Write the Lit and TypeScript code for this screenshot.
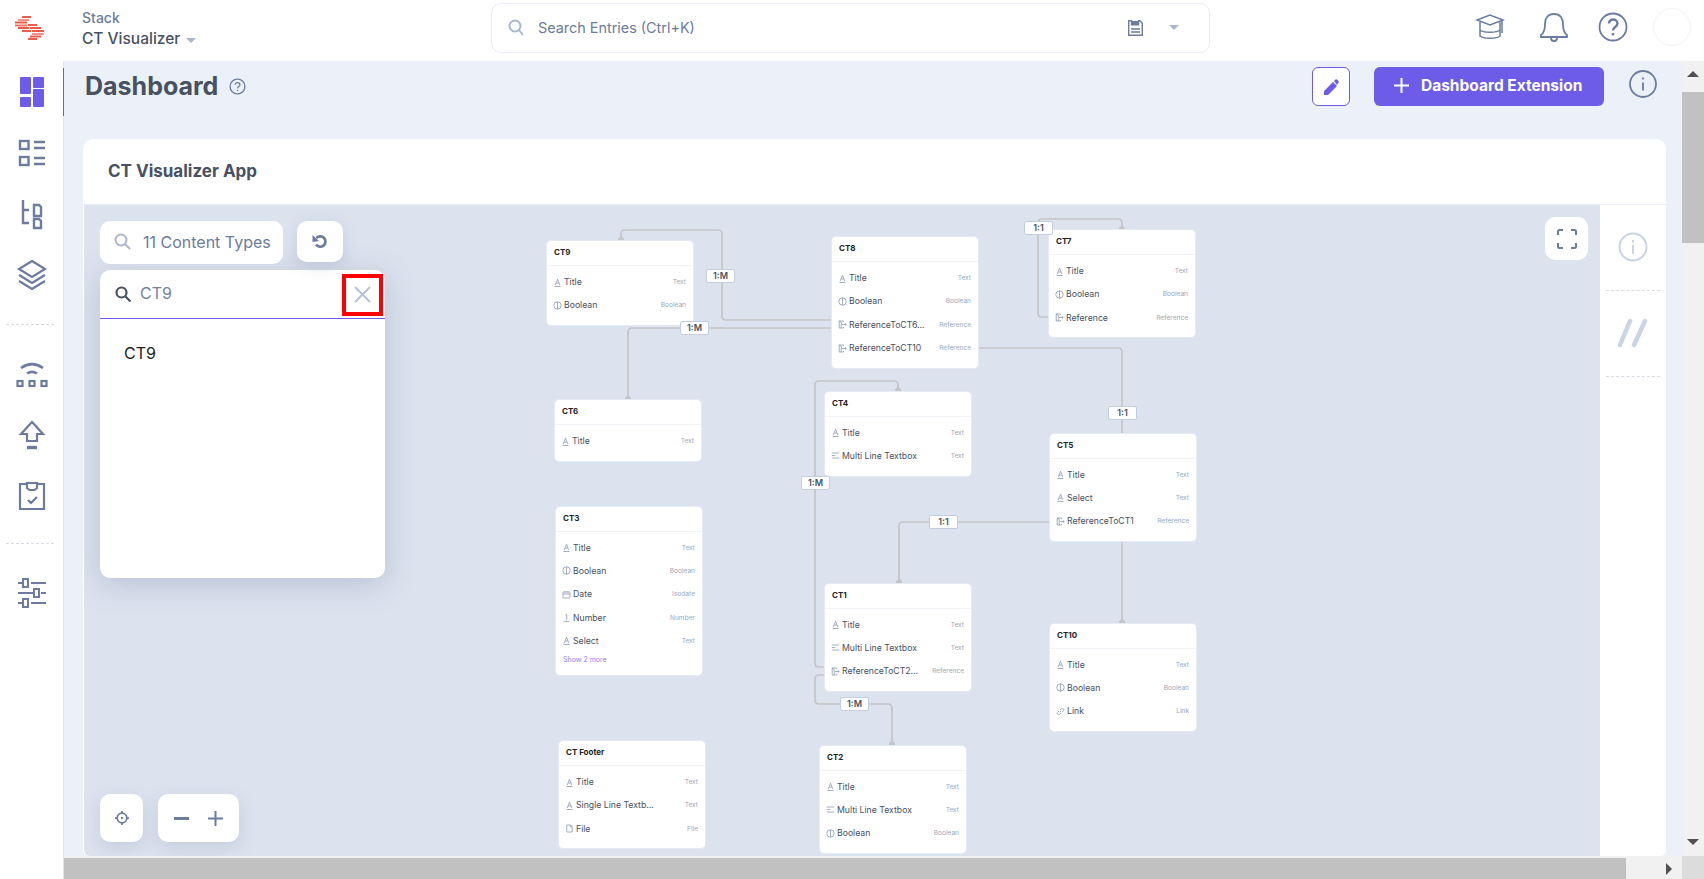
import { LitElement, html, css, svg } from "lit";
import { customElement } from "lit/decorators.js";

const ICONS: Record<string, any> = {
  text: svg`<path d="M2.2 7 4.5 1.2 6.8 7M3.1 5h2.8M1.5 8.5h6"/>`,
  bool: svg`<circle cx="4.5" cy="4.5" r="3.7"/><path d="M4.5.8v7.4"/>`,
  ref: svg`<path d="M5.5 2V1H1.2v7h4.3V7M1.2 1l2 1.2v6M4 4.5h4.2M6.8 3.3l1.4 1.2-1.4 1.2"/>`,
  multi: svg`<path d="M.8 2h7.4M.8 4.5h3.6M.8 7h7.4"/>`,
  date: svg`<rect x="1" y="2" width="7" height="6" rx=".7"/><path d="M1 4h7M3 1v1.5M6 1v1.5"/>`,
  num: svg`<path d="M3.4 2.2 4.7 1.2v5.6M1.5 8.4h6"/>`,
  link: svg`<path d="M3.7 5.3 5.3 3.7M3 4 1.7 5.3a1.4 1.4 0 0 0 2 2L5 6M4 3l1.3-1.3a1.4 1.4 0 0 1 2 2L6 5"/>`,
  file: svg`<path d="M1.8 1h3.6l1.8 1.8V8H1.8zM5.4 1v1.8h1.8"/>`,
};

type Row = [string, string, string];
interface CtNode { name: string; x: number; y: number; rows: Row[]; more?: string; }

const T: Row = ["text", "Title", "Text"];
const B: Row = ["bool", "Boolean", "Boolean"];
const M: Row = ["multi", "Multi Line Textbox", "Text"];

const NODES: CtNode[] = [
  { name: "CT9", x: 546, y: 240, rows: [T, B] },
  { name: "CT8", x: 831, y: 236, rows: [T, B, ["ref", "ReferenceToCT6...", "Reference"], ["ref", "ReferenceToCT10", "Reference"]] },
  { name: "CT7", x: 1048, y: 229, rows: [T, B, ["ref", "Reference", "Reference"]] },
  { name: "CT6", x: 554, y: 399, rows: [T] },
  { name: "CT4", x: 824, y: 390.5, rows: [T, M] },
  { name: "CT5", x: 1049, y: 432.5, rows: [T, ["text", "Select", "Text"], ["ref", "ReferenceToCT1", "Reference"]] },
  { name: "CT3", x: 555, y: 505.5, rows: [T, B, ["date", "Date", "Isodate"], ["num", "Number", "Number"], ["text", "Select", "Text"]], more: "Show 2 more" },
  { name: "CT1", x: 824, y: 582.5, rows: [T, M, ["ref", "ReferenceToCT2...", "Reference"]] },
  { name: "CT10", x: 1049, y: 622.5, rows: [T, B, ["link", "Link", "Link"]] },
  { name: "CT Footer", x: 558, y: 740, rows: [T, ["text", "Single Line Textb...", "Text"], ["file", "File", "File"]] },
  { name: "CT2", x: 819, y: 744.5, rows: [T, M, B] },
];

const EDGES = [
  "M832 320H726Q722 320 722 316V234Q722 230 718 230H625Q621 230 621 234V240",
  "M832 328H632Q628 328 628 332V399",
  "M978 348H1118Q1122 348 1122 352V433",
  "M1049 317H1042Q1038 317 1038 313V223Q1038 219 1042 219H1118Q1122 219 1122 223V229",
  "M825 667H819Q815 667 815 663V385Q815 381 819 381H894Q898 381 898 385V391",
  "M1049 522H903Q899 522 899 526V583",
  "M825 675H819Q815 675 815 679V700Q815 704 819 704H888Q892 704 892 708V745",
  "M1122 542V623",
];
const DOTS = [[621, 240], [628, 399], [1122, 229], [898, 390.5], [899, 582.5], [892, 744.5], [1122, 622.5]];
const LABELS: [string, number, number][] = [
  ["1:M", 706, 269], ["1:M", 680, 321], ["1:1", 1024, 221], ["1:1", 1108, 406],
  ["1:M", 801, 476], ["1:1", 929, 515], ["1:M", 840, 697],
];
const OX = 84, OY = 205;

@customElement("app-root")
export class AppRoot extends LitElement {
  static styles = css`
    :host { display: block; width: 1704px; height: 879px; overflow: hidden; font-family: Inter, "Noto Sans", sans-serif; background: #fff; color: #475161; }
    * { box-sizing: border-box; }
    svg { display: block; flex: none; }
    .ic { fill: none; stroke: #6b7c9f; stroke-width: 2; }
    .top { height: 61px; display: flex; align-items: center; background: #fff; }
    .logo { width: 82px; height: 61px; flex: none; }
    .stack { width: 409px; margin-top: -2px; }
    .stack small { display: block; font-size: 14px; line-height: 18px; color: #6c7c9b; font-weight: 500; }
    .stack b { display: flex; align-items: center; gap: 6px; font-size: 15.5px; line-height: 22px; font-weight: 500; color: #475161; margin-top: 1px; }
    .caret { width: 0; height: 0; border-left: 5px solid transparent; border-right: 5px solid transparent; border-top: 5px solid #a9b6cb; margin-top: 3px; }
    .global { width: 719px; height: 50px; border: 1px solid #e8edf5; border-radius: 10px; display: flex; align-items: center; padding-left: 16px; margin-top: -6px; }
    .global span { margin-left: 14px; font-size: 14.4px; color: #6c7c9b; flex: 1; }
    .global .caret { margin: 0 30px 0 26px; }
    .tools { display: flex; align-items: center; margin-left: 265px; margin-top: -8px; }
    .avatar { width: 38px; height: 38px; border-radius: 50%; border: 1px solid #f2f4f9; margin-left: 25px; }

    .body { display: grid; grid-template-columns: 64px 1618px 22px; grid-template-rows: 795px 23px; height: 818px; }
    .side { grid-row: 1 / 3; border-right: 1px solid #dde3ee; background: #fff; display: flex; flex-direction: column; }
    .nav { height: 61px; display: flex; align-items: center; justify-content: center; position: relative; }
    .nav.on::after { content: ""; position: absolute; right: -1px; top: 7px; width: 1px; height: 48px; background: #6c5ce7; }
    .dash { margin: 19px 6px 18px; border-top: 1px dashed #d6dbe4; height: 1px; width: 48px; }
    .dash.b { margin-top: 17px; }

    .main { background: #ecf0f8; padding: 0 16px 0 19px; display: flex; flex-direction: column; min-width: 0; }
    .head { height: 78px; flex: none; display: flex; align-items: flex-start; padding: 6px 10px 0 2px; }
    .head h1 { margin: 0; font-size: 25px; line-height: 38px; font-weight: 700; color: #475161; }
    .head .q { margin: 11px 0 0 11px; }
    .edit { margin-left: auto; width: 38px; height: 39px; border: 1px solid #6c5ce7; border-radius: 6px; background: #fff; display: flex; align-items: center; justify-content: center; }
    .cta { margin-left: 24px; width: 230px; height: 39px; border-radius: 6px; background: #6c5ce7; color: #fff; font-size: 15.5px; font-weight: 700; display: flex; align-items: center; padding: 0 0 3px 20px; gap: 12px; }
    .inf { margin: 3px -1px 0 25px; }

    .card { flex: 1; min-height: 0; background: #fff; border-radius: 10px 10px 6px 6px; display: flex; flex-direction: column; overflow: hidden; }
    .card h2 { margin: 0; height: 66px; flex: none; padding-left: 25px; font-size: 17px; line-height: 64px; font-weight: 700; color: #475161; border-bottom: 1px solid #e8edf5; }
    .work { flex: 1; min-height: 0; display: flex; padding-left: 1px; }
    .canvas { position: relative; flex: 1; background: #dce2ee; overflow: hidden; border-bottom-left-radius: 6px; }
    .rail { width: 66px; flex: none; display: flex; flex-direction: column; align-items: center; padding-top: 27px; }
    .rail hr { width: 54px; border: 0; border-top: 1px dashed #d6dbe4; margin: 0; }

    .edges { position: absolute; inset: 0; }
    .edges path { fill: none; stroke: #c4c5c7; stroke-width: 1.7; }
    .edges circle { fill: #c4c5c7; }
    .tag { position: absolute; width: 29px; height: 14px; background: #fff; border: 1px solid #c3cde0; border-radius: 2px; font-size: 9px; font-weight: 600; line-height: 12px; text-align: center; color: #475161; }

    .node { position: absolute; width: 148px; background: #fff; border: 1px solid #e6eaf3; border-radius: 5px; padding-bottom: 8px; }
    .node h3 { margin: 0; height: 25px; padding-left: 7px; font-size: 8px; line-height: 22px; font-weight: 700; color: #222; border-bottom: 1px solid #f1f3f8; margin-bottom: 4.5px; }
    .row { height: 23.3px; display: flex; align-items: center; padding: 0 7px 0 6px; }
    .row svg { width: 9px; height: 9px; fill: none; stroke: #8c99b3; stroke-width: .8; margin-right: 2px; }
    .row span { flex: 1; font-size: 8.7px; color: #475161; white-space: nowrap; }
    .row em { font-style: normal; font-size: 6.6px; color: #9aa7bd; }
    .more { height: 15px; line-height: 15px; padding-left: 7px; font-size: 7px; color: #8d7ff0; }

    .float { position: absolute; left: 16px; top: 16px; width: 285px; }
    .bar { display: flex; align-items: flex-start; gap: 14px; }
    .pill { width: 183px; height: 43px; background: #fff; border-radius: 10px; display: flex; align-items: center; padding: 0 0 2px 14px; gap: 12px; font-size: 16px; color: #6c7c9b; white-space: nowrap; }
    .reset { width: 46px; height: 41px; background: #fff; border-radius: 10px; display: flex; align-items: center; justify-content: center; box-shadow: 0 4px 16px rgba(108,124,155,.2); }
    .pop { margin-top: 6px; height: 308px; background: #fff; border-radius: 10px; box-shadow: 0 6px 30px rgba(108,124,155,.32); }
    .pophead { height: 49px; border-bottom: 1px solid #6c5ce7; display: flex; align-items: center; padding-left: 15px; gap: 9px; font-size: 16px; color: #748299; }
    .pophead span { flex: 1; padding-bottom: 2px; }
    .close { width: 41px; height: 42px; border: 4px solid #f00; margin-right: 2px; margin-top: 1px; display: flex; align-items: center; justify-content: center; }
    .pop p { margin: 0; padding: 22px 24px; font-size: 16px; line-height: 24px; color: #222; }

    .fs { position: absolute; right: 12px; top: 12px; width: 43px; height: 43px; background: #fff; border-radius: 10px; display: flex; align-items: center; justify-content: center; }
    .ctl { position: absolute; left: 16px; bottom: 14px; display: flex; gap: 15px; }
    .ctl div { height: 48px; background: #fff; border-radius: 10px; display: flex; align-items: center; justify-content: center; box-shadow: 0 6px 18px rgba(108,124,155,.2); }
    .loc { width: 43px; }
    .zoom { width: 81px; gap: 19px; }

    .vbar { background: #f1f1f1; display: flex; flex-direction: column; align-items: center; padding-top: 31px; position: relative; }
    .vthumb { width: 100%; height: 151px; background: #c1c1c1; }
    .up { position: absolute; top: 10px; left: 5px; border: solid transparent; border-width: 0 6px 6px; border-bottom-color: #505050; }
    .dn { position: absolute; bottom: 11px; left: 5px; border: solid transparent; border-width: 6px 6px 0; border-top-color: #505050; }
    .hbar { background: #f1f1f1; padding-top: 2px; display: flex; }
    .hthumb { width: 1562px; background: #c1c1c1; }
    .rt { align-self: center; margin-left: 40px; border: solid transparent; border-width: 6px 0 6px 6px; border-left-color: #505050; }
    .corner { background: #dcdcdc; }
  `;

  private node(n: CtNode) {
    return html`<div class="node" style="left:${n.x - OX}px;top:${n.y - OY}px">
      <h3>${n.name}</h3>
      ${n.rows.map(r => html`<div class="row"><svg viewBox="0 0 9 9">${ICONS[r[0]]}</svg><span>${r[1]}</span><em>${r[2]}</em></div>`)}
      ${n.more ? html`<div class="more">${n.more}</div>` : ""}
    </div>`;
  }

  render() {
    return html`
      <div class="top">
        <svg class="logo" viewBox="0 0 82 61" fill="#ef5b4b">
          <rect x="22" y="16" width="9" height="2"/><rect x="18" y="19" width="11" height="2" opacity=".65"/><rect x="15" y="21.500" width="12" height="2"/>
          <rect x="15" y="24.500" width="12" height="2" opacity=".85"/><rect x="18" y="27" width="11" height="2"/><rect x="22" y="30" width="9" height="2"/>
          <rect x="28" y="24" width="9" height="2"/><rect x="30" y="27" width="11" height="2"/><rect x="32" y="30" width="12" height="2"/>
          <rect x="32" y="33" width="12" height="2" opacity=".65"/><rect x="30" y="35.500" width="11" height="2"/><rect x="28" y="38" width="9" height="2"/>
        </svg>
        <div class="stack"><small>Stack</small><b>CT Visualizer <i class="caret"></i></b></div>
        <div class="global">
          <svg width="16" height="17" viewBox="0 0 16 17" fill="none" stroke="#a9b6cb" stroke-width="2"><circle cx="7" cy="7" r="5.500"/><path d="m11 11 4 5"/></svg>
          <span>Search Entries (Ctrl+K)</span>
          <svg width="15" height="16" viewBox="0 0 15 16"><path d="M.7.7h2.800v4h7v-4h1.300l2.500 2.500v12.100H.7z" fill="#fff" stroke="#6b7c9f" stroke-width="1.400"/><path d="M3.500 1h7v4h-7z" fill="#6b7c9f"/><path d="M3 9h9M3 12h9" stroke="#6b7c9f" stroke-width="1.400"/></svg>
          <i class="caret"></i>
        </div>
        <div class="tools">
          <svg width="30" height="28" viewBox="0 0 30 28" class="ic" style="stroke-width:1.500"><path d="M15 2 2 7l13 5 13-5zM5 9v14c3 3 17 3 20 0V9M5 17c3 3 17 3 20 0M27 8v12"/></svg>
          <svg width="30" height="30" viewBox="0 0 30 30" class="ic" style="stroke-width:1.800;margin-left:34px"><path d="M15 2c-6 0-9 4-9 10 0 6-1 9-4 11v2h26v-2c-3-2-4-5-4-11 0-6-3-10-9-10zM12 26a3 3 0 0 0 6 0"/></svg>
          <svg width="30" height="30" viewBox="0 0 30 30" class="ic" style="stroke-width:1.800;margin-left:29px"><circle cx="15" cy="15" r="13.500"/><path d="M11 11.500c0-5.500 8.500-5 8.500 0 0 3.500-4.500 3.500-4.500 7M15 21v2.500" stroke-width="2.400"/></svg>
          <div class="avatar"></div>
        </div>
      </div>

      <div class="body">
        <div class="side">
          <div class="nav on"><svg width="32" height="32" viewBox="14 76 32 32" fill="#6c5ce7"><rect x="18" y="77" width="11" height="17" rx="1"/><rect x="31" y="77" width="11" height="11" rx="1"/><rect x="18" y="97" width="11" height="10" rx="1"/><rect x="31" y="89" width="11" height="18" rx="1"/></svg></div>
          <div class="nav"><svg width="32" height="32" viewBox="14 137 32 32" class="ic" style="stroke-width:2.400"><rect x="18" y="141" width="8.500" height="8"/><rect x="18" y="157" width="8.500" height="8"/><path d="M32 142h11M32 148h11M32 158h11M32 164h11"/></svg></div>
          <div class="nav"><svg width="32" height="32" viewBox="14 198 32 32" class="ic" style="stroke-width:2.400"><path d="M21 200v23h6M21 210h6M32 205h5l2 2v9h-7zM32 219h5l2 2v7h-7z"/></svg></div>
          <div class="nav"><svg width="32" height="32" viewBox="14 259 32 32" class="ic" style="stroke-width:2.200"><path d="m30 261 13 8-13 8-13-8zM17 275l13 8 13-8M17 281l13 8 13-8"/></svg></div>
          <div class="dash"></div>
          <div class="nav"><svg width="36" height="32" viewBox="12 357 36 32" class="ic" style="stroke-width:2.600"><path d="M19 367c7-5 15-5 22 0M25 372.500c3-2 7-2 10 0"/><rect x="15.500" y="380" width="5" height="5" stroke-width="2.200"/><rect x="27.500" y="380" width="5" height="5" stroke-width="2.200"/><rect x="39.500" y="380" width="5" height="5" stroke-width="2.200"/></svg></div>
          <div class="nav"><svg width="32" height="32" viewBox="14 418 32 32" class="ic" style="stroke-width:2.200"><path d="M30 421 19 433h6v7h10v-7h6z"/><path d="M25 446.500h10" stroke-width="3.400"/></svg></div>
          <div class="nav"><svg width="32" height="34" viewBox="14 477 32 34" class="ic" style="stroke-width:2.200"><path d="M18 482h7v-1h10v1h7v25H18zM25 481v5l2.500 2h5l2.500-2v-5M26 498l3 3 6-6"/></svg></div>
          <div class="dash b"></div>
          <div class="nav"><svg width="32" height="32" viewBox="14 576 32 32" class="ic"><path d="M16 582h5M29 582h15M16 592h15M39 592h5M16 602h5M29 602h15"/><rect x="21" y="578" width="5" height="8"/><rect x="32" y="588" width="5" height="8"/><rect x="21" y="598" width="5" height="8"/></svg></div>
        </div>

        <div class="main">
          <div class="head">
            <h1>Dashboard</h1>
            <svg class="q" width="17" height="17" viewBox="0 0 16 16" fill="none" stroke="#6b7c9f" stroke-width="1.200"><circle cx="8" cy="8" r="7"/><path d="M6 6.300c0-2.800 4.300-2.500 4.300 0 0 1.700-2.300 1.700-2.300 3.400M8 11v1.300"/></svg>
            <div class="edit"><svg width="15" height="16" viewBox="0 0 15 16" fill="#6c5ce7"><path d="M0 16v-4L9 3l4 4-9 9zM10 2l1.500-1.500a1 1 0 0 1 1.400 0l1.600 1.600a1 1 0 0 1 0 1.400L13 6z"/></svg></div>
            <div class="cta"><svg width="15" height="15" viewBox="0 0 15 15" stroke="#fff" stroke-width="2"><path d="M7.500 0v15M0 7.500h15"/></svg>Dashboard Extension</div>
            <svg class="inf" width="28" height="28" viewBox="0 0 28 28" fill="none" stroke="#6b7c9f" stroke-width="1.800"><circle cx="14" cy="14" r="13"/><path d="M14 12.500v8M14 7.500v2"/></svg>
          </div>
          <div class="card">
            <h2>CT Visualizer App</h2>
            <div class="work">
              <div class="canvas">
                <svg class="edges" width="1515" height="651" viewBox="84 205 1515 651">
                  ${EDGES.map(d => svg`<path d=${d}></path>`)}
                  ${DOTS.map(d => svg`<circle cx=${d[0]} cy=${d[1]} r="3"></circle>`)}
                </svg>
                ${NODES.map(n => this.node(n))}
                ${LABELS.map(l => html`<div class="tag" style="left:${l[1] - OX}px;top:${l[2] - OY}px">${l[0]}</div>`)}

                <div class="float">
                  <div class="bar">
                    <div class="pill"><svg width="17" height="17" viewBox="0 0 17 17" fill="none" stroke="#a9b6cb" stroke-width="2"><circle cx="7" cy="7" r="5.500"/><path d="m11 11 5 5"/></svg>11 Content Types</div>
                    <div class="reset"><svg width="16" height="16" viewBox="0 0 16 16" fill="none" stroke="#6b7c9f" stroke-width="2.700"><path d="M4 10.500A5.200 5.200 0 1 0 4.500 4"/><path d="M.5 1 .5 8 7 7z" fill="#6b7c9f" stroke="none"/></svg></div>
                  </div>
                  <div class="pop">
                    <div class="pophead">
                      <svg width="16" height="16" viewBox="0 0 16 16" fill="none" stroke="#475161" stroke-width="2.200"><circle cx="6.500" cy="6.500" r="5"/><path d="m10.500 10.500 5 5"/></svg>
                      <span>CT9</span>
                      <div class="close"><svg width="17" height="17" viewBox="0 0 17 17" stroke="#b4c0d4" stroke-width="1.900"><path d="m1 1 15 15M16 1 1 16"/></svg></div>
                    </div>
                    <p>CT9</p>
                  </div>
                </div>

                <div class="fs"><svg width="20" height="20" viewBox="0 0 20 20" fill="none" stroke="#6b7c9f" stroke-width="2"><path d="M1 6V2.500Q1 1 2.500 1H6M14 1h3.500Q19 1 19 2.500V6M19 14v3.500Q19 19 17.500 19H14M6 19H2.500Q1 19 1 17.500V14"/></svg></div>
                <div class="ctl">
                  <div class="loc"><svg width="14" height="14" viewBox="0 0 16 16" fill="none" stroke="#6b7c9f" stroke-width="2"><circle cx="8" cy="8" r="5.500"/><circle cx="8" cy="8" r="1.300" fill="#6b7c9f" stroke="none"/><path d="M8 0v2.500M8 13.500V16M0 8h2.500M13.500 8H16"/></svg></div>
                  <div class="zoom"><svg width="15" height="3" viewBox="0 0 15 3" fill="#6b7c9f"><rect width="15" height="3"/></svg><svg width="15" height="15" viewBox="0 0 15 15" stroke="#6b7c9f" stroke-width="2"><path d="M7.500 0v15M0 7.500h15"/></svg></div>
                </div>
              </div>
              <div class="rail">
                <svg width="30" height="30" viewBox="0 0 30 30" fill="none" stroke="#cbd4e4" stroke-width="2"><circle cx="15" cy="15" r="13.500"/><path d="M15 13v9M15 8v2.500"/></svg>
                <hr style="margin-top:28px" />
                <svg width="30" height="30" viewBox="0 0 30 30" fill="none" stroke="#cbd4e4" stroke-width="4.500" stroke-linecap="round" style="margin-top:27px"><path d="M12 3 2 27M27 3 16 27"/></svg>
                <hr style="margin-top:28px" />
              </div>
            </div>
          </div>
        </div>
        <div class="vbar"><i class="up"></i><div class="vthumb"></div><i class="dn"></i></div>
        <div class="hbar"><div class="hthumb"></div><i class="rt"></i></div>
        <div class="corner"></div>
      </div>
    `;
  }
}
